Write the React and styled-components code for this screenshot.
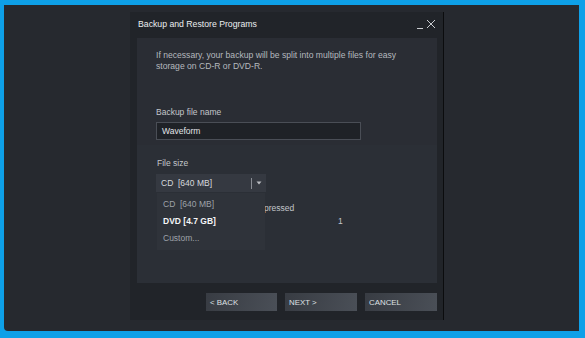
import React from "react";
import styled, { createGlobalStyle } from "styled-components";

const GlobalStyle = createGlobalStyle`
  html, body {
    margin: 0;
    padding: 0;
    background: #0ea0e8;
  }
  body {
    font-family: "Liberation Sans", Arial, sans-serif;
  }
`;

const Frame = styled.div`
  width: 585px;
  height: 338px;
  box-sizing: border-box;
  padding: 5px 6px 7px 4px;
  background: #0ea0e8;
`;

const Desktop = styled.div`
  height: 100%;
  box-sizing: border-box;
  background: #26292f;
  border-radius: 0 0 0 4px;
  padding: 7px 0 0 126px;
  display: flex;
  align-items: flex-start;
`;

const Dialog = styled.div`
  width: 314px;
  height: 308px;
  box-sizing: border-box;
  background: #212429;
  border-right: 1px solid #0b0c0e;
  display: flex;
  flex-direction: column;
`;

const TitleBar = styled.div`
  height: 26px;
  display: flex;
  align-items: center;
  justify-content: space-between;
  padding: 0 7px 2px 8px;
`;

const Title = styled.span`
  font-size: 8.7px;
  color: #eceef0;
`;

const WindowControls = styled.div`
  display: flex;
  align-items: flex-end;
  gap: 3px;
`;

const Body = styled.div`
  flex: 1;
  display: flex;
  flex-direction: column;
  padding: 0 6px 9px 7px;
`;

const Panel = styled.div`
  height: 245px;
  background: #2a2e35;
  display: flex;
  flex-direction: column;
`;

const Section = styled.div`
  position: relative;
  padding: ${(p) => p.$pad};
  background: ${(p) => p.$bg || "transparent"};
  flex: ${(p) => (p.$grow ? 1 : "none")};
`;

const Description = styled.p`
  margin: 0;
  width: 260px;
  font-size: 8.6px;
  line-height: 11px;
  color: #b5b9bf;
`;

const Label = styled.div`
  font-size: 8.5px;
  line-height: 10px;
  color: #c3c6cb;
  margin-top: ${(p) => p.$top || 0}px;
  margin-bottom: ${(p) => p.$gap || 6}px;
`;

const TextInput = styled.div`
  width: 205px;
  height: 18px;
  box-sizing: border-box;
  border: 1px solid #4a4e56;
  background: #1f2227;
  display: flex;
  align-items: center;
  padding-left: 5px;
  font-size: 8.5px;
  color: #e2e4e7;
`;

const Select = styled.div`
  width: 110px;
  height: 18px;
  box-sizing: border-box;
  background: #353941;
  display: flex;
  align-items: center;
  padding: 0 4px 0 5px;
  font-size: 8.5px;
  color: #d7dade;
  margin-left: -1px;
`;

const SelectValue = styled.span`
  flex: 1;
  white-space: pre;
`;

const Divider = styled.span`
  width: 1px;
  height: 11px;
  background: #8a8e95;
  margin-right: 4px;
`;

const Menu = styled.div`
  position: absolute;
  left: 20px;
  top: 48px;
  width: 108px;
  background: #2f333a;
  padding: 6px 0 6px 6px;
  box-sizing: border-box;
  display: flex;
  flex-direction: column;
  gap: 6px;
  z-index: 2;
`;

const MenuItem = styled.div`
  height: 11px;
  font-size: 8.5px;
  line-height: 11px;
  white-space: pre;
  color: ${(p) => (p.$active ? "#f4f5f7" : "#9ea2a9")};
  font-weight: ${(p) => (p.$active ? "bold" : "normal")};
`;

const OptionRow = styled.div`
  display: flex;
  align-items: center;
  height: 10px;
  margin-top: ${(p) => p.$top}px;
  padding-left: ${(p) => p.$left}px;
  font-size: 8.5px;
  line-height: 10px;
  color: #c3c6cb;
`;

const ButtonRow = styled.div`
  display: flex;
  justify-content: flex-end;
  gap: 8px;
  margin-top: 10px;
`;

const Button = styled.button`
  width: ${(p) => p.$w}px;
  height: 18px;
  border: none;
  padding: 0 0 0 4px;
  text-align: left;
  font-family: "Liberation Sans", Arial, sans-serif;
  font-size: 7.9px;
  color: #dfe1e4;
  background: linear-gradient(100deg, #383c43 0%, #4a4f57 100%);
`;

const Minimize = () => (
  <svg width="6" height="8" viewBox="0 0 6 8">
    <line x1="0" y1="7.5" x2="6" y2="7.5" stroke="#c9ccd0" strokeWidth="1" />
  </svg>
);

const Close = () => (
  <svg width="10" height="10" viewBox="0 0 10 10">
    <path d="M1 1 L9 9 M9 1 L1 9" stroke="#c9ccd0" strokeWidth="1" />
  </svg>
);

const Arrow = () => (
  <svg width="6" height="4" viewBox="0 0 6 4">
    <path d="M0.5 0.5 L5.5 0.5 L3 3.5 Z" fill="#b9bcc1" />
  </svg>
);

const sizes = [
  { label: "CD  [640 MB]" },
  { label: "DVD [4.7 GB]", active: true },
  { label: "Custom..." },
];

export default function App() {
  return (
    <>
      <GlobalStyle />
      <Frame>
        <Desktop>
          <Dialog>
            <TitleBar>
              <Title>Backup and Restore Programs</Title>
              <WindowControls>
                <Minimize />
                <Close />
              </WindowControls>
            </TitleBar>
            <Body>
              <Panel>
                <Section $pad="12px 0 5px 19px" $bg="#2a2d34">
                  <Description>
                    If necessary, your backup will be split into multiple files
                    for easy storage on CD-R or DVD-R.
                  </Description>
                  <Label $top={35} $gap={5}>
                    Backup file name
                  </Label>
                  <TextInput>Waveform</TextInput>
                </Section>
                <Section $pad="13px 0 0 20px" $bg="#2b2f36" $grow>
                  <Label $gap={6}>File size</Label>
                  <Select>
                    <SelectValue>CD  [640 MB]</SelectValue>
                    <Divider />
                    <Arrow />
                  </Select>
                  <Menu>
                    {sizes.map((item, index) => (
                      <MenuItem key={index} $active={item.active}>
                        {item.label}
                      </MenuItem>
                    ))}
                  </Menu>
                  <OptionRow $top={11} $left={89}>Compressed</OptionRow>
                  <OptionRow $top={3} $left={181}>1</OptionRow>
                </Section>
              </Panel>
              <ButtonRow>
                <Button $w={71}>&lt; BACK</Button>
                <Button $w={72}>NEXT &gt;</Button>
                <Button $w={72}>CANCEL</Button>
              </ButtonRow>
            </Body>
          </Dialog>
        </Desktop>
      </Frame>
    </>
  );
}
